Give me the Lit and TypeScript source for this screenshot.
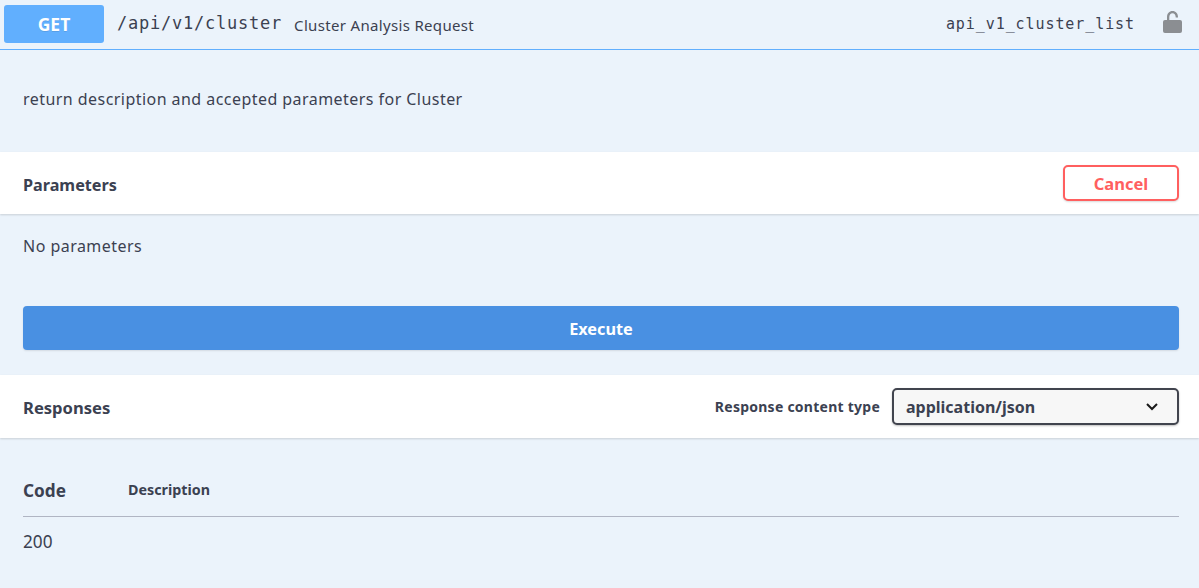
import { LitElement, html, css } from "lit";
import { customElement } from "lit/decorators.js";

@customElement("app-root")
export class AppRoot extends LitElement {
  static styles = css`
    :host {
      display: block;
      width: 1199px;
      height: 588px;
      overflow: hidden;
      background: #ebf3fb;
      color: #3b4151;
      font-family: "Noto Sans", "Noto Sans CJK KR", sans-serif;
    }
    .summary {
      display: flex;
      align-items: center;
      height: 49px;
      box-sizing: content-box;
      border-bottom: 1px solid #61affe;
      padding: 0 17px 0 4px;
    }
    .method {
      width: 100px;
      height: 38px;
      margin-top: -1px;
      border-radius: 3px;
      background: #61affe;
      color: #fff;
      font-weight: 700;
      font-size: 17.5px;
      display: flex;
      align-items: center;
      justify-content: center;
      text-shadow: 0 1px 0 rgba(0, 0, 0, 0.1);
    }
    .path {
      font-family: "DejaVu Sans Mono", monospace;
      font-size: 17px;
      letter-spacing: 0.77px;
      margin-left: 13px;
      margin-top: -3px;
    }
    .sumdesc {
      font-size: 15px;
      letter-spacing: 0.33px;
      margin-left: 12px;
      padding-top: 1px;
    }
    .opid {
      margin-left: auto;
      font-family: "DejaVu Sans Mono", monospace;
      font-size: 15px;
      letter-spacing: 0.92px;
      margin-top: -2px;
    }
    .lock {
      margin-left: 28px;
      display: block;
      margin-top: -5px;
    }
    .desc {
      height: 102px;
      box-sizing: border-box;
      padding: 38px 23px 0;
      font-size: 16px;
      letter-spacing: 0.45px;
      line-height: 22px;
    }
    .bar {
      height: 62px;
      background: #fff;
      box-shadow: 0 1px 2px rgba(0, 0, 0, 0.15);
      display: flex;
      align-items: center;
      padding: 0 20px 0 23px;
      position: relative;
    }
    .bar h4 {
      margin: 4px 0 0;
      font-size: 16.2px;
      font-weight: 700;
    }
    .resp-bar h4 {
      margin-top: 2px;
      font-size: 16.6px;
    }
    .cancel {
      margin-left: auto;
      width: 116px;
      height: 36px;
      box-sizing: border-box;
      border: 2px solid #ff5f5f;
      border-radius: 5px;
      background: #fff;
      color: #ff5f5f;
      font: 700 16.5px "Noto Sans", sans-serif;
      box-shadow: 0 1px 2px rgba(0, 0, 0, 0.15);
      padding: 0;
    }
    .noparams {
      height: 92px;
      box-sizing: border-box;
      padding: 21px 23px 0;
      font-size: 16px;
      letter-spacing: 0.47px;
      line-height: 22px;
    }
    .exec-wrap {
      padding: 0 20px 25px 23px;
    }
    .execute {
      display: block;
      width: 100%;
      height: 44px;
      border: 0;
      border-radius: 4px;
      background: #4990e2;
      color: #fff;
      font: 700 16.3px "Noto Sans", sans-serif;
      box-shadow: 0 1px 2px rgba(0, 0, 0, 0.1);
      padding: 2px 0 0;
    }
    .resp-bar {
      height: 63px;
    }
    .ctype {
      margin-left: auto;
      display: flex;
      align-items: center;
      gap: 12px;
    }
    .ctype label {
      font-size: 14px;
      letter-spacing: 0.25px;
      font-weight: 700;
    }
    .select {
      width: 287px;
      height: 37px;
      box-sizing: border-box;
      border: 2px solid #41444e;
      border-radius: 5px;
      background: #f7f7f7;
      box-shadow: 0 1px 2px rgba(0, 0, 0, 0.25);
      display: flex;
      align-items: center;
      justify-content: space-between;
      padding: 0 18px 0 12px;
      font-size: 16px;
      font-weight: 700;
    }
    .heads {
      display: flex;
      align-items: baseline;
      margin: 0 20px 0 23px;
      padding-top: 41px;
      height: 79px;
      box-sizing: border-box;
      border-bottom: 1px solid #b0b5c3;
      font-weight: 700;
    }
    .heads .code {
      width: 105px;
      font-size: 17.2px;
    }
    .heads .d {
      font-size: 14.3px;
      position: relative;
      top: -2px;
    }
    .row {
      padding: 14px 23px 0;
      font-size: 17.2px;
      line-height: 22px;
    }
  `;

  render() {
    return html`
      <div class="summary">
        <span class="method">GET</span>
        <span class="path">/api/v1/cluster</span>
        <span class="sumdesc">Cluster Analysis Request</span>
        <span class="opid">api_v1_cluster_list</span>
        <svg class="lock" width="19" height="22" viewBox="0 0 19 22" aria-hidden="true">
          <path fill="#8b8e92" d="M4 9V6C4 2.500 6.300 0 9.500 0s5.500 2.500 5.500 6v.5h-2.300V6c-.1-2.300-1.400-3.800-3.200-3.800S6.400 3.700 6.300 6v3z"/>
          <rect fill="#8b8e92" x="0" y="9" width="19" height="13" rx="2"/>
        </svg>
      </div>
      <div class="desc">return description and accepted parameters for Cluster</div>
      <div class="bar">
        <h4>Parameters</h4>
        <button class="cancel">Cancel</button>
      </div>
      <div class="noparams">No parameters</div>
      <div class="exec-wrap"><button class="execute">Execute</button></div>
      <div class="bar resp-bar">
        <h4>Responses</h4>
        <div class="ctype">
          <label>Response content type</label>
          <div class="select">
            <span>application/json</span>
            <svg width="14" height="9" viewBox="0 0 14 9" aria-hidden="true">
              <path d="M2 2l5 5 5-5" fill="none" stroke="#1a1a1a" stroke-width="2"/>
            </svg>
          </div>
        </div>
      </div>
      <div class="heads"><span class="code">Code</span><span class="d">Description</span></div>
      <div class="row">200</div>
    `;
  }
}
